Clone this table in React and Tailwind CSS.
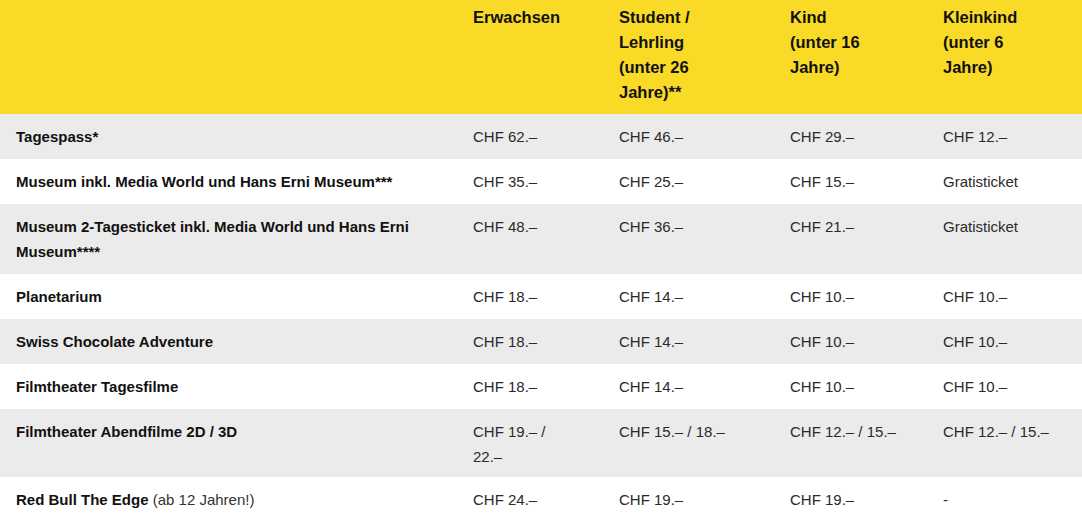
const font = { fontFamily: '"Liberation Sans", Arial, sans-serif' }

const headers = [
  ['Erwachsen'],
  ['Student /', 'Lehrling', '(unter 26', 'Jahre)**'],
  ['Kind', '(unter 16', 'Jahre)'],
  ['Kleinkind', '(unter 6', 'Jahre)'],
]

const rows = [
  { label: 'Tagespass*', prices: [['CHF 62.–'], ['CHF 46.–'], ['CHF 29.–'], ['CHF 12.–']] },
  { label: 'Museum inkl. Media World und Hans Erni Museum***', prices: [['CHF 35.–'], ['CHF 25.–'], ['CHF 15.–'], ['Gratisticket']] },
  { label: 'Museum 2-Tagesticket inkl. Media World und Hans Erni Museum****', prices: [['CHF 48.–'], ['CHF 36.–'], ['CHF 21.–'], ['Gratisticket']] },
  { label: 'Planetarium', prices: [['CHF 18.–'], ['CHF 14.–'], ['CHF 10.–'], ['CHF 10.–']] },
  { label: 'Swiss Chocolate Adventure', prices: [['CHF 18.–'], ['CHF 14.–'], ['CHF 10.–'], ['CHF 10.–']] },
  { label: 'Filmtheater Tagesfilme', prices: [['CHF 18.–'], ['CHF 14.–'], ['CHF 10.–'], ['CHF 10.–']] },
  { label: 'Filmtheater Abendfilme 2D / 3D', prices: [['CHF 19.– /', '22.–'], ['CHF 15.– / 18.–'], ['CHF 12.– / 15.–'], ['CHF 12.– / 15.–']], tight: true },
  { label: 'Red Bull The Edge', note: '(ab 12 Jahren!)', prices: [['CHF 24.–'], ['CHF 19.–'], ['CHF 19.–'], ['-']] },
]

const cols = 'grid grid-cols-[457px_146px_171px_153px_1fr]'

function Lines({ lines }) {
  return lines.map((l, i) => (
    <span key={i} className="block">{l}</span>
  ))
}

export default function App() {
  return (
    <div className="w-[1082px] bg-white text-black" style={font}>
      {/* header */}
      <div className={`${cols} bg-[#f9db27] text-[16.5px] font-bold leading-[25px] text-[#111]`}>
        <div />
        {headers.map((h, i) => (
          <div key={i} className="pl-4 pr-4 pt-[5px] pb-[9px]">
            <Lines lines={h} />
          </div>
        ))}
      </div>

      {/* rows */}
      {rows.map((r, i) => (
        <div
          key={i}
          className={`${cols} text-[15px] leading-[25px] ${i % 2 === 0 ? 'bg-[#ebebeb]' : 'bg-white'} ${r.tight ? 'h-[68px]' : ''}`}
        >
          <div className="pl-4 pr-4 pt-[10px] pb-[10px] font-bold text-[#111]">
            {r.label}
            {r.note && <span className="font-normal text-[#333]"> {r.note}</span>}
          </div>
          {r.prices.map((p, j) => (
            <div key={j} className="pl-4 pr-4 pt-[10px] pb-[10px] text-[#2a2a2a]">
              <Lines lines={p} />
            </div>
          ))}
        </div>
      ))}
    </div>
  )
}
